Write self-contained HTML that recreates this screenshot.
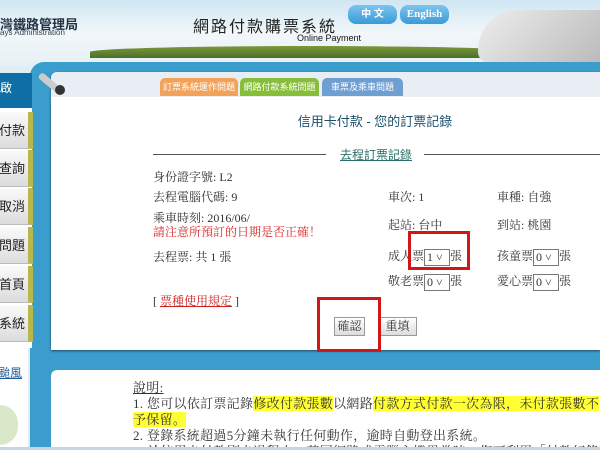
<!DOCTYPE html>
<html style="width:600px;height:450px;overflow:hidden"><head><meta charset="utf-8"><style>
*{margin:0;padding:0;box-sizing:border-box}
body{width:600px;height:450px;overflow:hidden;position:relative;background:#dfeef5;font-family:"Liberation Serif","Noto Serif CJK SC",serif;font-size:12px;color:#333}
.a{position:absolute}
.cj{font-family:"Liberation Sans","Noto Sans CJK TC",sans-serif}
.menu{left:0;width:33px;height:37px;background:linear-gradient(#fafafa,#dcdcdc);border-bottom:1px solid #bbb;border-right:5px solid #b8b84a;font-size:13px;line-height:37px;white-space:nowrap;overflow:hidden;color:#222}
.menu span{position:absolute;right:3px;top:0}
.sel{border:1px solid #777;background:#fff;height:17px;display:inline-block;width:26px;vertical-align:middle;font-size:12px;line-height:15px;padding-left:2px}
.red{border:3px solid #d01818}
</style></head><body>
<div class="a" style="left:0;top:0;width:600px;height:66px;background:linear-gradient(#cfe6f2,#f2f7fa 50%,#e6f0f4)"></div>
<div class="a" style="left:90px;top:46px;width:440px;height:12px;background:linear-gradient(#7a9a3a,#4d6e2a);border-radius:50% 50% 0 0"></div>
<div class="a" style="left:478px;top:10px;width:122px;height:52px;background:linear-gradient(135deg,#eee,#bbb);border-radius:40px 0 0 10px"></div>
<div class="a cj" style="left:0;top:14px;font-size:13px;font-weight:bold;color:#234">灣鐵路管理局</div>
<div class="a" style="left:0;top:28px;font-size:8px;color:#345;font-family:'Liberation Sans',sans-serif">ays Administration</div>
<div class="a cj" style="left:193px;top:13px;font-size:16px;color:#222;letter-spacing:2px">網路付款購票系統</div>
<div class="a" style="left:297px;top:33px;font-size:9px;color:#111;font-family:'Liberation Sans',sans-serif">Online Payment</div>
<div class="a cj" style="left:348px;top:5px;width:49px;height:19px;border-radius:8px;background:linear-gradient(#7cc4ee,#3a9ad8);color:#fff;font-size:10px;text-align:center;line-height:19px;font-weight:bold">中 文</div>
<div class="a" style="left:400px;top:5px;width:49px;height:19px;border-radius:8px;background:linear-gradient(#7cc4ee,#3a9ad8);color:#fff;font-size:11px;text-align:center;line-height:19px;font-weight:bold">English</div>
<div class="a" style="left:30px;top:62px;width:570px;height:388px;background:#3a9dcc;border-radius:14px 0 0 0"></div>
<div class="a cj" style="left:0;top:73px;width:32px;height:35px;background:#0e6fa6;color:#fff;font-size:12px;line-height:30px">啟</div>
<div class="a" style="left:0;top:108px;width:32px;height:240px;background:#fff"></div>
<div class="a menu cj" style="top:112px"><span>付款</span></div>
<div class="a menu cj" style="top:150px"><span>查詢</span></div>
<div class="a menu cj" style="top:188px"><span>取消</span></div>
<div class="a menu cj" style="top:227px"><span>問題</span></div>
<div class="a menu cj" style="top:266px"><span>首頁</span></div>
<div class="a menu cj" style="top:305px"><span>系統</span></div>
<div class="a" style="left:0;top:345px;width:28px;height:105px;background:#fff"></div>
<div class="a cj" style="left:-2px;top:364px;font-size:12px;color:#1d5a99;text-decoration:underline">颱風</div>
<div class="a" style="left:0;top:405px;width:18px;height:40px;background:#d8e8c8;border-radius:0 20px 20px 0"></div>
<div class="a" style="left:51px;top:72px;width:549px;height:278px;background:#fff;border-radius:6px 0 0 0;box-shadow:0 1px 2px #246"></div>
<div class="a" style="left:51px;top:72px;width:549px;height:25px;background:#e8eef3;border-radius:6px 0 0 0"></div>
<div class="a" style="left:42px;top:72px;width:28px;height:7px;background:#ccc;transform:rotate(40deg);transform-origin:0 0;border-radius:3px"></div>
<div class="a" style="left:55px;top:85px;width:10px;height:10px;background:#333;border-radius:50%"></div>
<div class="a cj" style="left:160px;top:78px;width:78px;height:18px;background:#f3a25a;border-radius:5px 5px 0 0;color:#fff;font-size:9px;text-align:center;line-height:18px">訂票系統運作問題</div>
<div class="a cj" style="left:240px;top:78px;width:79px;height:18px;background:#86be3a;border-radius:5px 5px 0 0;color:#fff;font-size:9px;text-align:center;line-height:18px">網路付款系統問題</div>
<div class="a cj" style="left:322px;top:78px;width:81px;height:18px;background:#6f9ed3;border-radius:5px 5px 0 0;color:#fff;font-size:9px;text-align:center;line-height:18px">車票及乘車問題</div>
<div class="a cj" style="left:270px;top:111px;width:210px;text-align:center;font-size:13px;color:#1b4f6b">信用卡付款 - 您的訂票記錄</div>
<div class="a" style="left:153px;top:154px;width:173px;border-top:1px solid #555"></div>
<div class="a" style="left:424px;top:154px;width:176px;border-top:1px solid #555"></div>
<div class="a cj" style="left:340px;top:146px;color:#2a6f6a;text-decoration:underline;font-size:12px">去程訂票記錄</div>
<div class="a" style="left:153px;top:168px">身份證字號: L2</div>
<div class="a" style="left:153px;top:188px">去程電腦代碼: 9</div>
<div class="a" style="left:153px;top:209px">乘車時刻: 2016/06/</div>
<div class="a" style="left:153px;top:223px;color:#d22">請注意所預訂的日期是否正確！</div>
<div class="a" style="left:153px;top:248px">去程票: 共 1 張</div>
<div class="a" style="left:153px;top:292px">[ <span style="color:#c22;text-decoration:underline">票種使用規定</span> ]</div>
<div class="a" style="left:388px;top:188px">車次: 1</div>
<div class="a" style="left:497px;top:188px">車種: 自強</div>
<div class="a" style="left:388px;top:216px">起站: 台中</div>
<div class="a" style="left:497px;top:216px">到站: 桃園</div>
<div class="a" style="left:388px;top:247px">成人票<span class="sel">1 ˅</span>張</div>
<div class="a" style="left:497px;top:247px">孩童票<span class="sel">0 ˅</span>張</div>
<div class="a" style="left:388px;top:272px">敬老票<span class="sel">0 ˅</span>張</div>
<div class="a" style="left:497px;top:272px">愛心票<span class="sel">0 ˅</span>張</div>
<div class="a" style="left:334px;top:317px;width:31px;height:19px;background:linear-gradient(#fff,#ddd);border:1px solid #999;text-align:center;line-height:17px">確認</div>
<div class="a" style="left:378px;top:317px;width:39px;height:19px;background:linear-gradient(#fff,#ddd);border:1px solid #999;text-align:center;line-height:17px">重填</div>
<div class="a red" style="left:408px;top:231px;width:62px;height:39px"></div>
<div class="a red" style="left:317px;top:297px;width:64px;height:55px"></div>
<div class="a" style="left:51px;top:370px;width:549px;height:80px;background:#fff;border-radius:6px 0 0 0"></div>
<div class="a" style="left:133px;top:380px;width:475px;height:70px;overflow:hidden;line-height:16px;font-size:13px;letter-spacing:0.3px">
<span style="text-decoration:underline">說明:</span><br>
1. 您可以依訂票記錄<span style="background:#ff3">修改付款張數</span>以網路<span style="background:#ff3">付款方式付款一次為限，未付款張數不予保留。</span><br>
2. 登錄系統超過5分鐘未執行任何動作，逾時自動登出系統。<br>
<span style="white-space:nowrap">3. 於信用卡付款刷卡過程中，若因網路或電腦主機異常時，您可利用「付款紀錄查</span></div>
<div class="a" style="left:0;top:447px;width:600px;height:3px;background:#c8d4de"></div>
</body></html>
